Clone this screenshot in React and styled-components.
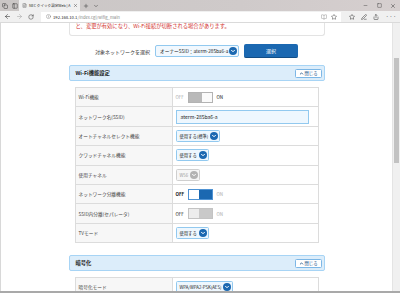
import React from 'react';
import styled, { createGlobalStyle } from 'styled-components';
import {
  ArrowLeft,
  ArrowRight,
  RotateCw,
  Info,
  Star,
  X,
  Plus,
  ChevronDown,
  ChevronUp,
  Minus,
  Square,
  PenLine,
  Share,
  BookOpen,
  Copy,
  PanelLeft,
  FileText,
} from 'lucide-react';

const GlobalStyle = createGlobalStyle`
  html, body {
    margin: 0;
    padding: 0;
    width: 400px;
    height: 293px;
    overflow: hidden;
    background: #fff;
  }
  body {
    font-family: "Noto Sans CJK JP", "Noto Sans", sans-serif;
    color: #333;
  }
`;

const Window = styled.div`
  width: 400px;
  height: 293px;
  display: flex;
  flex-direction: column;
  box-sizing: border-box;
  border-bottom: 2px solid #a9a9a9;
  overflow: hidden;
`;

const TabStrip = styled.div`
  height: 11px;
  flex: none;
  display: flex;
  align-items: stretch;
  background: linear-gradient(90deg, #cac6c5 0%, #cfcaca 60%, #d6cfcf 100%);
  color: #444;
`;

const StripButton = styled.div`
  width: ${(p) => p.$w || 10}px;
  display: flex;
  align-items: center;
  justify-content: center;
  color: #3a3a3a;
`;

const Tab = styled.div`
  width: 61px;
  background: #f0f0f0;
  display: flex;
  align-items: center;
  padding: 0 2px 0 3px;
  box-sizing: border-box;
  gap: 2px;
`;

const TabTitle = styled.span`
  flex: 1;
  font-size: 3.6px;
  color: #222;
  white-space: nowrap;
`;

const WindowControls = styled.div`
  margin-left: auto;
  display: flex;
`;

const AddressRow = styled.div`
  height: 12px;
  flex: none;
  display: flex;
  align-items: center;
  background: #f0f0f0;
  border-bottom: 1px solid #dadada;
  box-sizing: border-box;
  padding-left: 1px;
`;

const UrlField = styled.div`
  flex: 1;
  height: 10px;
  margin-left: 4px;
  background: #fff;
  display: flex;
  align-items: center;
  gap: 2px;
  padding: 0 4px 0 5px;
  font-size: 4.2px;
  color: #888;
`;

const UrlHost = styled.span`
  color: #222;
`;

const UrlActions = styled.div`
  margin-left: auto;
  display: flex;
  gap: 4px;
  color: #444;
`;

const HubButtons = styled.div`
  display: flex;
  align-items: center;
  gap: 6px;
  padding: 0 3px 0 8px;
  color: #333;
  font-size: 6px;
  letter-spacing: 0.5px;
`;

const Viewport = styled.div`
  flex: 1;
  display: flex;
  min-height: 0;
  border-left: 1px solid #d8d8d8;
`;

const Page = styled.div`
  flex: 1;
  overflow: hidden;
  background: #fff;
`;

const Scrollbar = styled.div`
  width: 7px;
  flex: none;
  background: #f0f0f0;
  border-left: 1px solid #e4e4e4;
  display: flex;
  flex-direction: column;
`;

const Thumb = styled.div`
  margin: 35px 1px 0 1px;
  height: 105px;
  background: #c2c2c2;
`;

const Container = styled.div`
  width: 256px;
  margin: 0 auto;
`;

const Notice = styled.div`
  border: 1px solid #e3e3e3;
  border-top: none;
  border-radius: 0 0 3px 3px;
  padding: 0 6px 5px;
  font-size: 5.3px;
  line-height: 7px;
  color: #d2302c;
`;

const SelectRow = styled.div`
  margin-top: 8px;
  display: flex;
  align-items: center;
  justify-content: center;
  gap: 5px;
`;

const RowLabel = styled.span`
  font-size: 5px;
  color: #333;
`;

const NetworkSelect = styled.div`
  width: 84px;
  height: 12px;
  box-sizing: border-box;
  border: 1px solid #92c9ef;
  background: #f1f8fe;
  border-radius: 2px;
  display: flex;
  align-items: center;
  padding: 0 1px 0 4px;
  font-size: 4.7px;
  color: #222;
  white-space: nowrap;
  overflow: hidden;
`;

const PrimaryButton = styled.div`
  width: 54px;
  height: 14px;
  box-sizing: border-box;
  background: #1b68b1;
  border-bottom: 1.5px solid #124d85;
  border-radius: 2px;
  color: #fff;
  font-size: 5px;
  display: flex;
  align-items: center;
  justify-content: center;
`;

const Section = styled.section`
  margin-top: ${(p) => p.$gap}px;
`;

const SectionHeader = styled.div`
  height: 16px;
  box-sizing: border-box;
  background: #dcedfa;
  border: 1.5px solid #a7d4f5;
  border-radius: 2px;
  display: flex;
  align-items: center;
  padding: 0 2px 0 6px;
`;

const SectionTitle = styled.span`
  font-size: 5.3px;
  font-weight: bold;
  color: #222;
`;

const CloseButton = styled.div`
  margin-left: auto;
  width: 27px;
  height: 9px;
  box-sizing: border-box;
  background: #fff;
  border: 1px solid #7db7e6;
  border-radius: 1.5px;
  display: flex;
  align-items: center;
  justify-content: center;
  gap: 1px;
  font-size: 4.3px;
  color: #1b4f86;
`;

const Table = styled.div`
  margin: 6px 6px 0;
  border: 1px solid #dcdcdc;
  border-bottom: none;
`;

const Row = styled.div`
  display: grid;
  grid-template-columns: 97px 1fr;
  height: 19.4px;
  box-sizing: border-box;
  border-bottom: 1px solid #dcdcdc;
`;

const LabelCell = styled.div`
  background: #f7f7f7;
  border-right: 1px solid #dcdcdc;
  display: flex;
  align-items: center;
  padding-left: 3px;
  font-size: 4.7px;
  color: #444;
  white-space: nowrap;
`;

const ValueCell = styled.div`
  display: flex;
  align-items: center;
  padding-left: 3px;
  gap: 2px;
`;

const TextInput = styled.div`
  width: 133px;
  height: 14px;
  box-sizing: border-box;
  border: 1px solid #92c9ef;
  background: #eef7fe;
  display: flex;
  align-items: center;
  padding-left: 4px;
  font-size: 5px;
  color: #222;
`;

const SmallSelect = styled.div`
  height: 12px;
  box-sizing: border-box;
  border: 1px solid ${(p) => (p.$disabled ? '#cfcfcf' : '#92c9ef')};
  background: ${(p) => (p.$disabled ? '#f6f6f6' : '#eef7fe')};
  border-radius: 1.5px;
  display: flex;
  align-items: center;
  gap: 2px;
  padding: 0 1px 0 3px;
  font-size: 4.3px;
  color: ${(p) => (p.$disabled ? '#999' : '#222')};
  white-space: nowrap;
`;

const DropIcon = styled.span`
  width: 8px;
  height: 8px;
  border-radius: 50%;
  background: ${(p) => (p.$disabled ? '#b3b3b3' : '#1b68b1')};
  display: flex;
  align-items: center;
  justify-content: center;
  color: #fff;
  flex: none;
`;

const SwitchText = styled.span`
  font-size: 4.5px;
  width: ${(p) => p.$w}px;
  color: ${(p) => (p.$active ? '#111' : '#aaa')};
  font-weight: ${(p) => (p.$bold ? 'bold' : 'normal')};
`;

const Track = styled.div`
  width: 25px;
  height: 11px;
  box-sizing: border-box;
  display: flex;
  flex-direction: ${(p) => (p.$knobLeft ? 'row' : 'row-reverse')};
  border: 1px solid ${(p) => p.$edge};
  background: ${(p) => p.$fill};
  margin-right: 2px;
`;

const Knob = styled.div`
  width: 10px;
  background: ${(p) => p.$color};
`;

const switchLooks = {
  onDisabled: { knobLeft: false, fill: '#b9b9b9', edge: '#b3b3b3', knob: '#fafafa' },
  offActive: { knobLeft: true, fill: '#1b68b1', edge: '#4f93d4', knob: '#ffffff' },
  offDisabled: { knobLeft: true, fill: '#c9c9c9', edge: '#c3c3c3', knob: '#ededed' },
};

const Toggle = ({ look }) => {
  const s = switchLooks[look];
  const isOn = look === 'onDisabled';
  return (
    <>
      <SwitchText $w={10} $active={!isOn} $bold={look === 'offActive'}>
        OFF
      </SwitchText>
      <Track $knobLeft={s.knobLeft} $fill={s.fill} $edge={s.edge}>
        <Knob $color={s.knob} />
      </Track>
      <SwitchText $w={10} $active={isOn}>
        ON
      </SwitchText>
    </>
  );
};

const Dropdown = ({ children, disabled }) => (
  <SmallSelect $disabled={disabled}>
    {children}
    <DropIcon $disabled={disabled}>
      <ChevronDown size={6} strokeWidth={4} />
    </DropIcon>
  </SmallSelect>
);

const wifiRows = [
  { label: 'Wi-Fi機能', value: <Toggle look="onDisabled" /> },
  { label: 'ネットワーク名(SSID)', value: <TextInput>aterm-285ba6-a</TextInput> },
  { label: 'オートチャネルセレクト機能', value: <Dropdown>使用する(標準)</Dropdown> },
  { label: 'クワッドチャネル機能', value: <Dropdown>使用する</Dropdown> },
  { label: '使用チャネル', value: <Dropdown disabled>W56</Dropdown> },
  { label: 'ネットワーク分離機能', value: <Toggle look="offActive" /> },
  { label: 'SSID内分離(セパレータ)', value: <Toggle look="offDisabled" /> },
  { label: 'TVモード', value: <Dropdown>使用する</Dropdown> },
];

const cryptoRows = [
  { label: '暗号化モード', value: <Dropdown>WPA/WPA2-PSK(AES)</Dropdown> },
];

const SettingsSection = ({ title, rows, gap }) => (
  <Section $gap={gap}>
    <SectionHeader>
      <SectionTitle>{title}</SectionTitle>
      <CloseButton>
        <ChevronUp size={5} strokeWidth={4} />
        閉じる
      </CloseButton>
    </SectionHeader>
    <Table>
      {rows.map((r) => (
        <Row key={r.label}>
          <LabelCell>{r.label}</LabelCell>
          <ValueCell>{r.value}</ValueCell>
        </Row>
      ))}
    </Table>
  </Section>
);

const App = () => (
  <Window>
    <GlobalStyle />
    <TabStrip>
      <StripButton $w={10}>
        <Copy size={6} />
      </StripButton>
      <StripButton $w={9}>
        <PanelLeft size={6} />
      </StripButton>
      <Tab>
        <FileText size={5} color="#666" />
        <TabTitle>NEC クイック設定Web | A</TabTitle>
        <X size={5} />
      </Tab>
      <StripButton $w={11}>
        <Plus size={6} />
      </StripButton>
      <StripButton $w={9}>
        <ChevronDown size={6} />
      </StripButton>
      <WindowControls>
        <StripButton $w={14}>
          <Minus size={5} />
        </StripButton>
        <StripButton $w={14}>
          <Square size={5} />
        </StripButton>
        <StripButton $w={14}>
          <X size={6} />
        </StripButton>
      </WindowControls>
    </TabStrip>
    <AddressRow>
      <StripButton $w={12}>
        <ArrowLeft size={7} />
      </StripButton>
      <StripButton $w={12}>
        <ArrowRight size={7} color="#aaa" />
      </StripButton>
      <StripButton $w={12}>
        <RotateCw size={6} />
      </StripButton>
      <UrlField>
        <Info size={5} color="#777" />
        <span>
          <UrlHost>192.168.10.1</UrlHost>/index.cgi/wifig_main
        </span>
        <UrlActions>
          <BookOpen size={6} color="#999" />
          <Star size={6} />
        </UrlActions>
      </UrlField>
      <HubButtons>
        <Star size={6} />
        <PenLine size={6} />
        <Share size={6} />
        <span>···</span>
      </HubButtons>
    </AddressRow>
    <Viewport>
      <Page>
        <Container>
          <Notice>と、変更が有効になり、Wi-Fi接続が切断される場合があります。</Notice>
          <SelectRow>
            <RowLabel>対象ネットワークを選択</RowLabel>
            <NetworkSelect>
              <span style={{ flex: 1 }}>オーナーSSID：aterm-285ba6-a</span>
              <DropIcon>
                <ChevronDown size={6} strokeWidth={4} />
              </DropIcon>
            </NetworkSelect>
            <PrimaryButton>選択</PrimaryButton>
          </SelectRow>
          <SettingsSection title="Wi-Fi機能設定" rows={wifiRows} gap={7} />
          <SettingsSection title="暗号化" rows={cryptoRows} gap={12} />
        </Container>
      </Page>
      <Scrollbar>
        <Thumb />
      </Scrollbar>
    </Viewport>
  </Window>
);

export default App;
